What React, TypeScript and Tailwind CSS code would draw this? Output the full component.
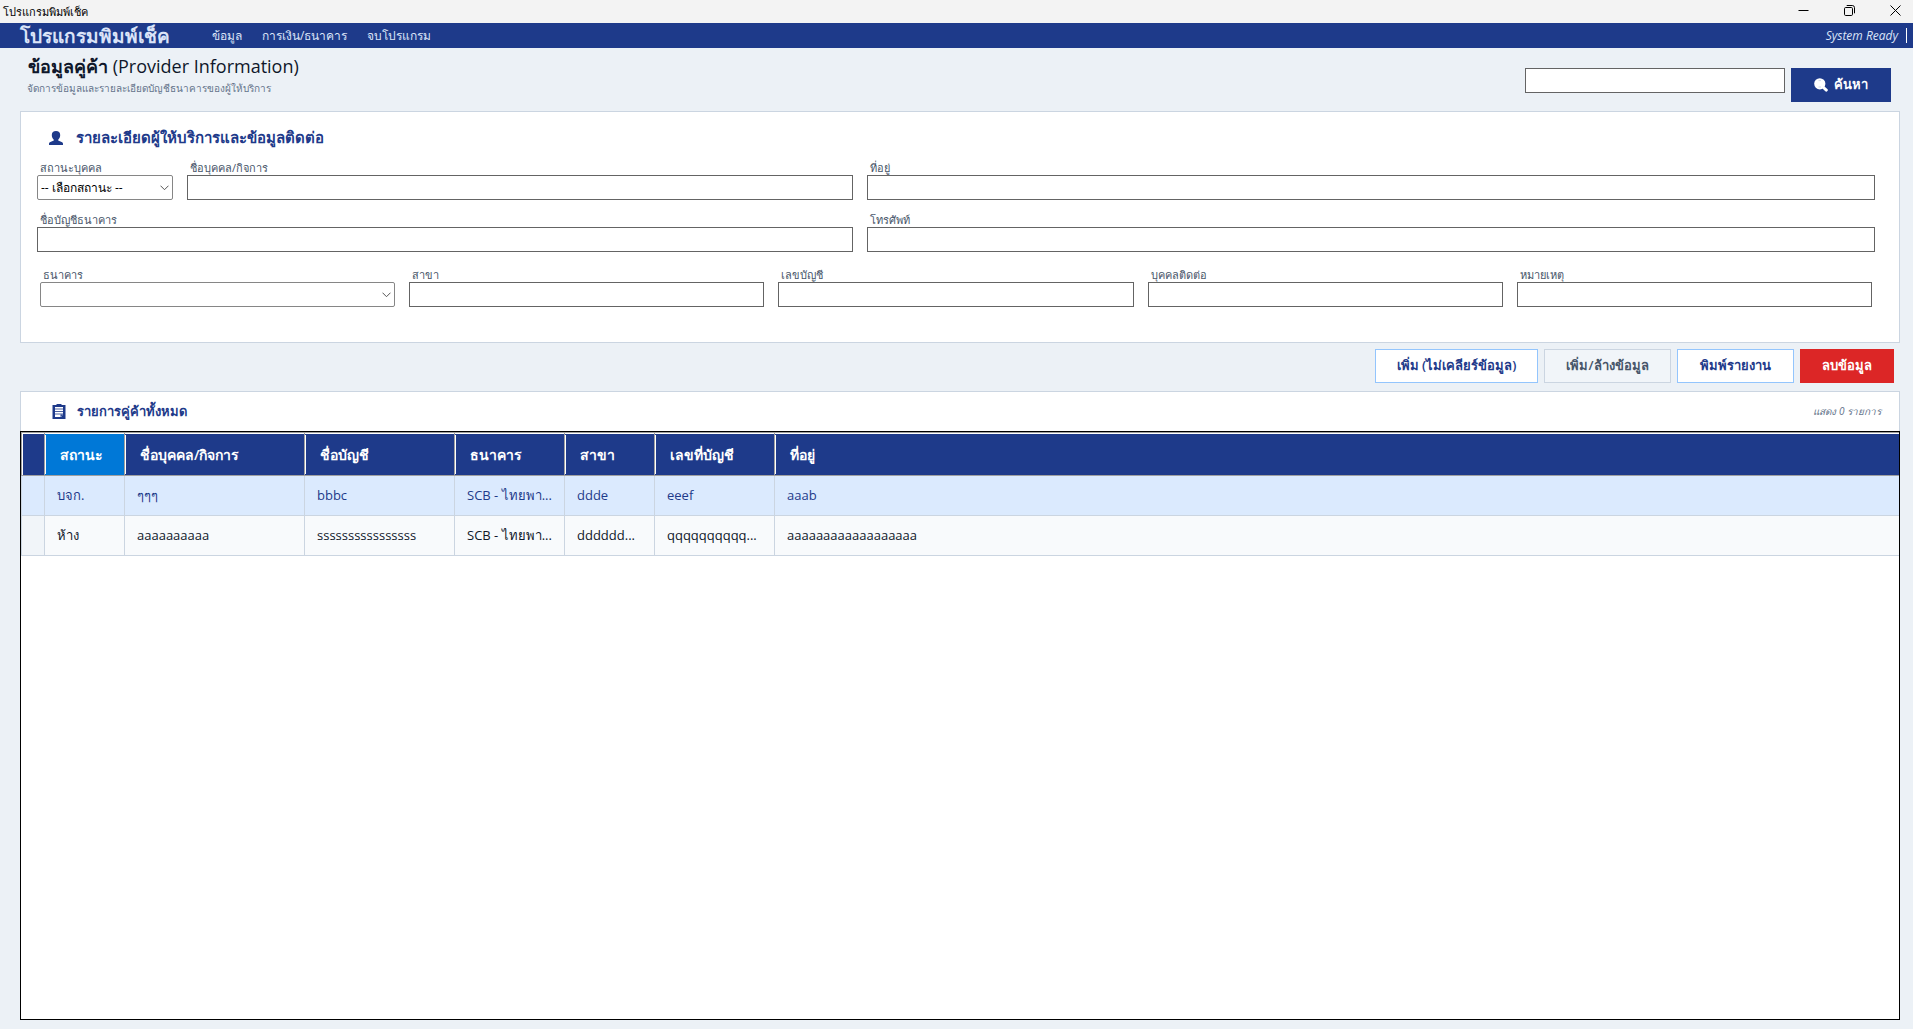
import React from "react";

const inputBase = "block h-[25px] w-full border border-[#646464] bg-white px-1 text-[13px] text-[#0f172a] outline-none";
const labelBase = "block h-4 pl-[3px] text-[11px] leading-[18px] whitespace-nowrap text-[#475569]";

function Field({ id, label, className = "" }: { id: string; label: string; className?: string }) {
  return (
    <div className={`min-w-0 ${className}`}>
      <label htmlFor={id} className={labelBase}>
        {label}
      </label>
      <input id={id} type="text" className={inputBase} />
    </div>
  );
}

function SelectField({ id, label, options, className = "" }: { id: string; label: string; options: string[]; className?: string }) {
  return (
    <div className={`min-w-0 ${className}`}>
      <label htmlFor={id} className={labelBase}>
        {label}
      </label>
      <div className="relative">
        <select id={id} className="block h-[25px] w-full appearance-none rounded-xs border border-[#868686] bg-white pl-[3px] text-xs text-black outline-none">
          {options.map((o) => (
            <option key={o}>{o}</option>
          ))}
        </select>
        <svg className="pointer-events-none absolute top-[10px] right-1 h-[6px] w-[9px]" viewBox="0 0 9 6" fill="none" stroke="#555" strokeWidth="1">
          <path d="M0.5 0.7 4.5 4.7 8.5 0.7" />
        </svg>
      </div>
    </div>
  );
}

const columns = ["สถานะ", "ชื่อบุคคล/กิจการ", "ชื่อบัญชี", "ธนาคาร", "สาขา", "เลขที่บัญชี", "ที่อยู่"];
const rows = [
  ["บจก.", "ๆๆๆ", "bbbc", "SCB - ไทยพา...", "ddde", "eeef", "aaab"],
  ["ห้าง", "aaaaaaaaaa", "ssssssssssssssss", "SCB - ไทยพา...", "dddddd...", "qqqqqqqqqq...", "aaaaaaaaaaaaaaaaaa"],
];

function TitleBar() {
  return (
    <div className="flex h-[23px] items-center justify-between bg-[#f3f3f3] text-black">
      <span className="pl-[3px] text-[11px] leading-4">โปรแกรมพิมพ์เช็ค</span>
      <div className="flex h-full items-start gap-2.5">
        <button aria-label="Minimize" className="flex h-5 w-9 items-center justify-center">
          <svg className="h-[11px] w-[11px]" viewBox="0 0 11 11"><path d="M0.5 5.5h10" stroke="#000" /></svg>
        </button>
        <button aria-label="Restore" className="flex h-5 w-9 items-center justify-center">
          <svg className="h-[11px] w-[11px]" viewBox="0 0 11 11" fill="none" stroke="#000">
            <rect x="0.5" y="2.5" width="8" height="8" rx="1.2" />
            <path d="M2.7 0.5h5.6a2.2 2.2 0 0 1 2.2 2.2v5.6" />
          </svg>
        </button>
        <button aria-label="Close" className="flex h-5 w-9 items-center justify-center">
          <svg className="h-[11px] w-[11px]" viewBox="0 0 11 11"><path d="M0.5 0.5l10 10M10.5 0.5l-10 10" stroke="#000" /></svg>
        </button>
      </div>
    </div>
  );
}

export default function App() {
  return (
    <div className="flex min-h-screen flex-col bg-[#ecf1f6] font-['Open_Sans','Noto_Sans',sans-serif]">
      <TitleBar />
      <nav className="flex h-[25px] items-center bg-[#1e3a8a] text-[#dbe4f8]">
        <span className="w-[192px] pl-5 text-[19px] leading-6 font-semibold whitespace-nowrap">โปรแกรมพิมพ์เช็ค</span>
        <div className="flex gap-5 pl-5 text-xs leading-5">
          <button>ข้อมูล</button>
          <button>การเงิน/ธนาคาร</button>
          <button>จบโปรแกรม</button>
        </div>
        <div className="ml-auto flex items-center gap-2 pr-1.5">
          <span className="text-xs italic">System Ready</span>
          <span className="h-[15px] w-px bg-white" />
        </div>
      </nav>

      <main className="flex flex-1 flex-col pr-[13px] pb-[9px] pl-5">
        <header className="flex h-[63px] items-start justify-between">
          <div className="pt-1">
            <h1 className="pl-2 text-lg leading-7 font-medium text-[#0f172a]">
              <span className="font-semibold">ข้อมูลคู่ค้า</span> (Provider Information)
            </h1>
            <p className="pl-[7px] text-[10px] leading-4 text-[#64748b]">จัดการข้อมูลและรายละเอียดบัญชีธนาคารของผู้ให้บริการ</p>
          </div>
          <form className="flex items-start gap-1.5 pt-5 pr-[9px]" onSubmit={(e) => e.preventDefault()}>
            <input aria-label="ค้นหา" type="text" className="h-[25px] w-[260px] border border-[#646464] bg-white px-1 text-[13px] outline-none" />
            <button className="flex h-[34px] w-[100px] items-center justify-center gap-1.5 bg-[#1e3a8a] text-[13px] font-semibold text-white">
              <svg className="h-[14px] w-[14px]" viewBox="0 0 14 14">
                <circle cx="5.8" cy="5.8" r="5.6" fill="#fff" />
                <path d="M9.500 9.500l2.800 2.600" stroke="#fff" strokeWidth="3" strokeLinecap="round" />
                <path d="M4.5 2.6h2.500M4.5 9h2.500" stroke="#c3cde6" strokeWidth="0.8" />
              </svg>
              ค้นหา
            </button>
          </form>
        </header>

        <section className="h-[232px] border border-[#cbd5e1] bg-white px-4 pr-6">
          <h2 className="flex h-[47px] items-center gap-[13px] pt-1 pl-3 text-[15px] font-semibold text-[#1e3a8a]">
            <svg className="h-[14px] w-[14px]" viewBox="0 0 14 14" fill="#1e3a8a">
              <path d="M7 0c2.600 0 4.200 1.500 4.200 4 0 2-.8 3.800-2 4.700v.8l3.400 1.400c.9.4 1.400 1 1.400 1.900V14H0v-1.200c0-.9.5-1.500 1.400-1.900l3.400-1.400v-.8C3.600 7.800 2.800 6 2.800 4 2.800 1.500 4.400 0 7 0Z" />
            </svg>
            รายละเอียดผู้ให้บริการและข้อมูลติดต่อ
          </h2>
          <div className="grid grid-cols-[816fr_1008fr] gap-x-3.5 gap-y-[11px]">
            <div className="flex gap-3.5">
              <SelectField id="status" label="สถานะบุคคล" options={["-- เลือกสถานะ --"]} className="w-[136px] shrink-0" />
              <Field id="name" label="ชื่อบุคคล/กิจการ" className="flex-1" />
            </div>
            <Field id="address" label="ที่อยู่" />
            <Field id="account-name" label="ชื่อบัญชีธนาคาร" />
            <Field id="phone" label="โทรศัพท์" />
          </div>
          <div className="mt-3.5 grid grid-cols-5 gap-x-3.5 px-[3px]">
            <SelectField id="bank" label="ธนาคาร" options={[""]} />
            <Field id="branch" label="สาขา" />
            <Field id="account-no" label="เลขบัญชี" />
            <Field id="contact" label="บุคคลติดต่อ" />
            <Field id="note" label="หมายเหตุ" />
          </div>
        </section>

        <div className="flex h-12 items-start justify-end gap-1.5 pt-1.5 pr-1.5 text-[13px] font-semibold whitespace-nowrap text-[#1e3a8a]">
          <button className="h-[34px] w-[163px] border border-[#93c5fd] bg-white">เพิ่ม (ไม่เคลียร์ข้อมูล)</button>
          <button className="h-[34px] w-[127px] border border-[#cbd5e1] bg-[#f1f5f9] text-[#475569]">เพิ่ม/ล้างข้อมูล</button>
          <button className="h-[34px] w-[117px] border border-[#93c5fd] bg-white">พิมพ์รายงาน</button>
          <button className="h-[34px] w-[94px] bg-[#dc2626] text-white">ลบข้อมูล</button>
        </div>

        <section className="flex flex-1 flex-col">
          <div className="flex h-10 items-center justify-between border-x border-t border-[#cbd5e1] bg-white pr-[18px] pl-[31px]">
            <h2 className="flex items-center gap-[11px] text-[13px] font-semibold text-[#1e3a8a]">
              <svg className="h-[15px] w-[14px]" viewBox="0 0 14 15">
                <path d="M0.500 1h13v14h-13z" fill="#1e3a8a" />
                <path d="M3 3h8v7.500l-2 2.500H3z" fill="#fff" />
                <path d="M4.500 0h5v2.600h-5z" fill="#1e3a8a" />
                <path d="M3 5h8M3 7.500h8M3 10h8" stroke="#1e3a8a" strokeWidth="0.800" />
                <path d="M8.500 13v-2.500H11z" fill="#1e3a8a" />
              </svg>
              รายการคู่ค้าทั้งหมด
            </h2>
            <span className="text-[10px] text-[#64748b] italic">แสดง 0 รายการ</span>
          </div>
          <div className="flex-1 border border-black bg-white">
            <table className="w-full table-fixed border-separate border-spacing-0 text-left text-[13px]">
              <colgroup>
                <col className="w-6" />
                <col className="w-20" />
                <col className="w-[180px]" />
                <col className="w-[150px]" />
                <col className="w-[110px]" />
                <col className="w-[90px]" />
                <col className="w-[120px]" />
                <col />
              </colgroup>
              <thead className="text-sm text-white">
                <tr>
                  <th aria-label="Row" className="h-11 border border-[#a0a0a0] bg-[#1e3a8a] p-0">
                    <div className="h-[42px] border-t border-l border-white" />
                  </th>
                  {columns.map((c, i) => (
                    <th
                      key={c}
                      className={`h-11 border-y border-[#a0a0a0] p-0 font-semibold ${i === 0 ? "bg-[#0078d7]" : "bg-[#1e3a8a]"} ${i < 6 ? "border-r" : ""}`}
                    >
                      <div className="flex h-[42px] items-center border-t border-white">
                        <div className="flex h-[39px] items-center border-l border-white pl-3.5">{c}</div>
                      </div>
                    </th>
                  ))}
                </tr>
              </thead>
              <tbody>
                {rows.map((r, ri) => (
                  <tr key={ri} className={ri === 0 ? "bg-[#dbeafe] text-[#1e3a8a]" : "bg-[#f8fafc] text-[#0f172a]"}>
                    <td className={`h-10 border-r border-b border-l border-[#cbd5e1] p-0 ${ri === 0 ? "" : "bg-[#f1f5f9]"}`} />
                    {r.map((v, i) => (
                      <td key={i} className={`h-10 border-b border-[#cbd5e1] py-0 pl-3 whitespace-nowrap ${i < 6 ? "border-r" : ""}`}>
                        {v}
                      </td>
                    ))}
                  </tr>
                ))}
              </tbody>
            </table>
          </div>
        </section>
      </main>
    </div>
  );
}
